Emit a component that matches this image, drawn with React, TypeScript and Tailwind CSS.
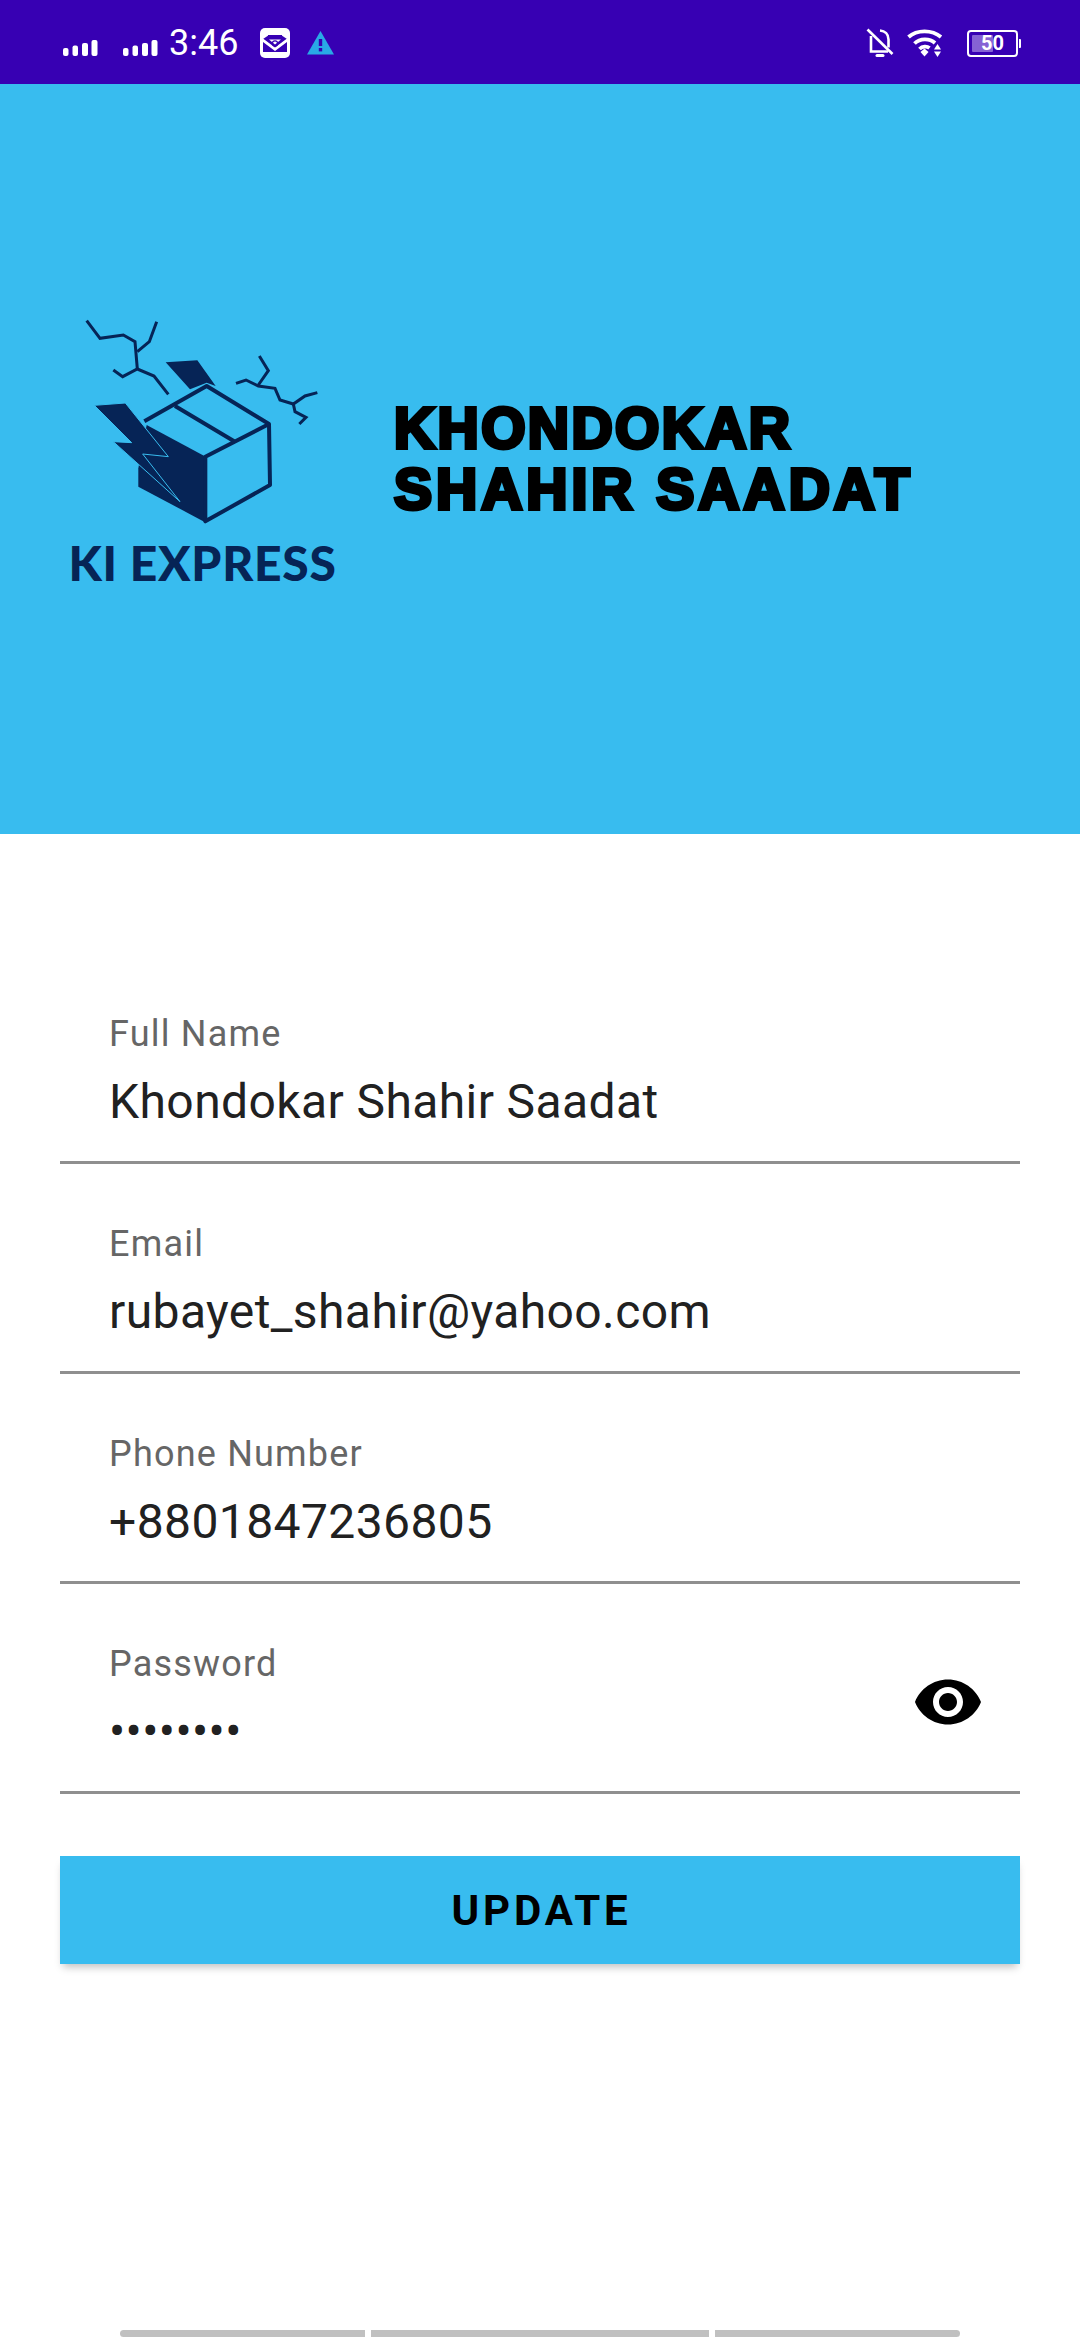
function Signal() {
  return (
    <svg width="36" height="18" viewBox="0 0 36 18" fill="#fff">
      <rect x="0" y="9" width="5.5" height="8" rx="2" />
      <rect x="9.5" y="6.5" width="5.5" height="10.5" rx="2" />
      <rect x="19" y="4" width="6" height="13" rx="2" />
      <rect x="28.5" y="1" width="6" height="16" rx="2" />
    </svg>
  );
}

function GmailIcon() {
  return (
    <svg width="30" height="30" viewBox="0 0 30 30">
      <rect width="30" height="30" rx="5" fill="#fff" />
      <path d="M3 11l6-4h12l6 4v13H3z" fill="#3700b3" />
      <path d="M3 10.500l12 9 12-9v3.500l-12 9-12-9z" fill="#fff" />
      <path d="M8 7h14v2.500H8z" fill="#3700b3" />
      <path d="M9 11.500h12L15 16.500z" fill="#fff" />
      <circle cx="15" cy="15.500" r="2.600" fill="none" stroke="#3700b3" strokeWidth="1.100" />
    </svg>
  );
}

function Warning() {
  return (
    <svg width="27" height="24" viewBox="0 0 27 24">
      <path d="M13.5 0L27 23.5H0z" fill="#29a9e6" />
      <rect x="11.8" y="8" width="3.4" height="7" fill="#3700b3" />
      <rect x="11.8" y="17" width="3.4" height="3.4" fill="#3700b3" />
    </svg>
  );
}

function BellOff() {
  return (
    <svg width="28" height="30" viewBox="0 0 28 30" fill="none" stroke="#fff" strokeWidth="2.6">
      <path d="M14 2.5c5 .4 8.500 3.800 8.500 9v8" />
      <path d="M5 8v15.500h17" />
      <path d="M1.500 1.500L26.500 26" />
      <path d="M11 27.500h6" strokeWidth="3" strokeLinecap="round" />
    </svg>
  );
}

function Wifi() {
  return (
    <svg width="36" height="28" viewBox="0 0 36 28" fill="none" stroke="#fff" strokeWidth="3.8">
      <path d="M1.500 8C10 .5 25 .5 34 8" />
      <path d="M7.500 14.500C13 9 22.500 9 28 14" />
      <path d="M12.500 20C15.500 17 20 17 22.500 19" />
      <path d="M13.500 23L17.500 19.500l4 3.500-4 4.500z" fill="#fff" stroke="none" />
      <path d="M30.500 15l3.500 5.500h-7z" fill="#fff" stroke="none" />
      <path d="M30.500 28l3.500-5.500h-7z" fill="#fff" stroke="none" />
    </svg>
  );
}

function Battery() {
  return (
    <div className="flex items-center">
      <div className="relative h-[27px] w-[51px] rounded-[4px] border-2 border-white">
        <div className="absolute left-[3px] top-[3px] bottom-[3px] w-[21px] rounded-[1px] bg-[#8562d4]" />
        <span className="absolute inset-0 flex items-center justify-center font-['Roboto',sans-serif] text-[20px] leading-none font-bold text-white">50</span>
      </div>
      <div className="ml-[1px] h-[9px] w-[2px] rounded-r-[1px] bg-white" />
    </div>
  );
}

function StatusBar() {
  return (
    <div className="flex h-[84px] items-center justify-between bg-[#3700b3] pl-[63px] pr-[59px] pt-[2px]">
      <div className="flex items-center">
        <div className="mt-[10px]"><Signal /></div>
        <div className="ml-[24px] mt-[10px]"><Signal /></div>
        <span className="ml-[10px] font-['Roboto',sans-serif] text-[36px] leading-none text-white">3:46</span>
        <div className="ml-[22px]"><GmailIcon /></div>
        <div className="ml-[17px]"><Warning /></div>
      </div>
      <div className="flex items-center">
        <BellOff />
        <div className="ml-[13px]"><Wifi /></div>
        <div className="ml-[24px]"><Battery /></div>
      </div>
    </div>
  );
}

function Logo() {
  const navy = "#062456";
  return (
    <div className="mb-[18px] flex h-[300px] w-[300px] flex-col items-center">
      <svg width="300" height="236" viewBox="0 0 900 708" fill="none">
        <g stroke={navy} strokeWidth="9" strokeLinejoin="miter">
          <path d="M110 62L150 115L220 105L255 125L262 207" />
          <path d="M262 155L298 125L320 65" />
          <path d="M190 210L218 230L262 207L312 228L355 283" />
          <path d="M628 168L655 212L625 255" />
          <path d="M558 250L588 240L625 258L675 265L690 300L730 312L765 288L802 278" />
          <path d="M730 312L735 335L768 352L748 372" />
        </g>
        <path d="M347 187L442 181L497 258L470 248L420 268z" fill={navy} />
        <path d="M290 375L470 472L468 668L265 560V505z" fill={navy} />
        <path
          d="M133 316L226 309L355 470L278 462L390 605L190 425L245 428z"
          fill={navy}
          stroke="#38bcef"
          strokeWidth="3"
        />
        <path
          d="M283 364L470 258L657 372L660 555L466 664V470L657 372M375 318L555 425"
          stroke={navy}
          strokeWidth="12"
          strokeLinejoin="round"
        />
      </svg>
      <span className="ml-[5px] mt-[2px] font-['Lato',sans-serif] text-[48px] leading-[50px] font-black tracking-[0.7px] whitespace-nowrap text-[#062456]">
        KI EXPRESS
      </span>
    </div>
  );
}

function Header() {
  return (
    <div className="flex h-[750px] items-center bg-[#38bcef] pl-[50px]">
      <Logo />
      <div className="ml-[44px] font-['Liberation_Sans',sans-serif] text-[57px] leading-[61px] font-bold text-black [-webkit-text-stroke:4px_black]">
        <div className="tracking-[2.4px]">KHONDOKAR</div>
        <div className="tracking-[4px]">SHAHIR SAADAT</div>
      </div>
    </div>
  );
}

function Field({ label, value, eye }: { label: string; value: string; eye?: boolean }) {
  return (
    <div className="relative h-[210px] border-b-[3px] border-[#8f8f8f] pl-[49px] pt-[60px]">
      <div className="font-['Roboto',sans-serif] text-[36px] leading-[40px] tracking-[1.2px] text-[#666666]">{label}</div>
      <div className="mt-[18px] font-['Roboto',sans-serif] text-[48px] leading-[60px] tracking-[0.4px] text-[#212121]">{value}</div>
      {eye && (
        <svg className="absolute right-[36px] top-[82px]" width="72" height="72" viewBox="0 0 24 24" fill="#000">
          <path d="M12 4.500C7 4.500 2.730 7.610 1 12c1.730 4.390 6 7.500 11 7.500s9.270-3.110 11-7.500c-1.730-4.390-6-7.500-11-7.500zM12 17c-2.760 0-5-2.240-5-5s2.240-5 5-5 5 2.240 5 5-2.240 5-5 5zm0-8c-1.660 0-3 1.340-3 3s1.340 3 3 3 3-1.340 3-3-1.340-3-3-3z" />
        </svg>
      )}
    </div>
  );
}

export default function App() {
  return (
    <div className="flex h-[2340px] w-[1080px] flex-col overflow-hidden bg-white">
      <StatusBar />
      <Header />
      <div className="px-[60px] pt-[120px]">
        <Field label="Full Name" value="Khondokar Shahir Saadat" />
        <Field label="Email" value="rubayet_shahir@yahoo.com" />
        <Field label="Phone Number" value="+8801847236805" />
        <Field label="Password" value="••••••••" eye />
        <button className="mt-[62px] flex h-[108px] w-full items-center justify-center bg-[#38bcef] pl-[3px] font-['Roboto',sans-serif] text-[42px] font-bold tracking-[3.8px] text-black shadow-[0_6px_8px_-3px_rgba(0,0,0,0.25)]">
          UPDATE
        </button>
      </div>
      <div className="mt-auto mb-[3px] flex justify-center gap-[6px]">
        <div className="h-[7px] w-[245px] rounded-l-[4px] bg-[#c0c0c0]" />
        <div className="h-[7px] w-[338px] bg-[#c0c0c0]" />
        <div className="h-[7px] w-[245px] rounded-r-[4px] bg-[#c0c0c0]" />
      </div>
    </div>
  );
}
